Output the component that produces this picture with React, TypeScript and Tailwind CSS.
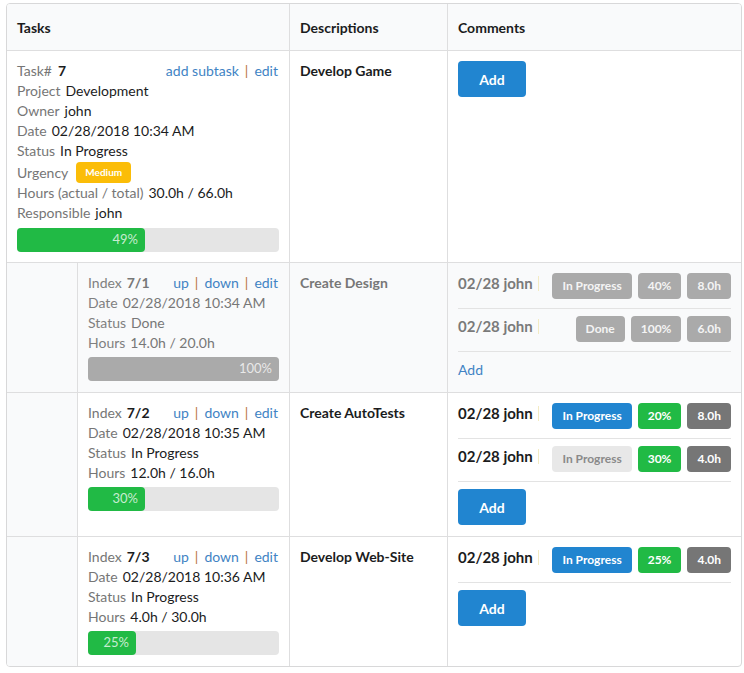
import React from 'react'

type Tag = { text: string; cls: string }
type Comment = { who: string; tags: Tag[] }

const FONT = { fontFamily: 'Lato, "Open Sans", sans-serif' }

function Sep() {
  return <span className="mx-[6px] text-[#b8743f]">|</span>
}

function Progress({ pct, width, barCls, label }: { pct: number; width: number; barCls: string; label: string }) {
  return (
    <div className="h-6 w-full rounded-[4px] bg-[#e5e5e5]">
      <div
        className={`flex h-6 items-center justify-end rounded-[4px] pr-[7px] text-[13px] text-white/75 ${barCls}`}
        style={{ width: Math.round((pct / 100) * width) }}
      >
        {label}
      </div>
    </div>
  )
}

function Line({ label, value, bold, dim }: { label: string; value: string; bold?: boolean; dim?: boolean }) {
  return (
    <div className="h-5 leading-5 whitespace-nowrap">
      <span className={dim ? 'text-[#808080]' : 'text-[#767676]'}>{label}</span>
      <span className={`ml-[5px] ${dim ? 'text-[#777]' : 'text-[#1b1c1d]'} ${bold ? 'font-bold' : ''}`}>{value}</span>
    </div>
  )
}

function Comments({ items, addButton, dim }: { items: Comment[]; addButton: boolean; dim?: boolean }) {
  return (
    <div className="flex flex-col">
      {items.map((c, i) => (
        <div key={i} className={`flex items-start border-b border-[#e3e3e3] pb-[9px] ${i > 0 ? 'pt-[7px]' : ''}`}>
          <span className={`text-[15px] font-bold leading-5 ${dim ? 'text-[#7a7a7a]' : 'text-[#1b1c1d]'}`}>{c.who}</span>
          <span className="ml-[5px] mt-[3px] h-[15px] w-px bg-[#f3ebc3]" />
          <div className="ml-auto flex gap-[6px]">
            {c.tags.map((t, j) => (
              <span key={j} className={`flex h-[26px] items-center rounded-[4px] px-[10px] text-[12px] font-bold ${t.cls}`}>
                {t.text}
              </span>
            ))}
          </div>
        </div>
      ))}
      {addButton ? (
        <button className={`${items.length ? 'mt-[7px]' : ''} h-9 w-[68px] rounded-[4px] bg-[#2185d0] text-[14px] font-bold text-white`}>
          Add
        </button>
      ) : (
        <a className="mt-[8px] h-5 leading-5 text-[#4183c4]">Add</a>
      )}
    </div>
  )
}

function SubTask(props: {
  index: string
  date: string
  status: string
  hours: string
  pct: number
  desc: string
  comments: Comment[]
  addButton: boolean
  dim?: boolean
}) {
  const { dim } = props
  return (
    <div className={`grid grid-cols-[282px_158px_1fr] border-t border-[#dededf] ${dim ? 'bg-[#f9fafb]' : ''}`}>
      <div className="grid grid-cols-[71px_1fr]">
        <div className="border-r border-[#dededf] bg-[#f9fafb]" />
        <div className="px-[10px] pt-[10px] pb-[11px]">
          <div className="flex h-5 justify-between leading-5">
            <div>
              <span className={dim ? 'text-[#808080]' : 'text-[#767676]'}>Index</span>
              <span className={`ml-[5px] font-bold ${dim ? 'text-[#777]' : 'text-[#1b1c1d]'}`}>{props.index}</span>
            </div>
            <div className="pr-px text-[#4183c4]">
              up<Sep />down<Sep />edit
            </div>
          </div>
          <Line label="Date" value={props.date} dim={dim} />
          <Line label="Status" value={props.status} dim={dim} />
          <Line label="Hours" value={props.hours} dim={dim} />
          <div className="mt-1">
            <Progress
              pct={props.pct}
              width={191}
              barCls={dim ? 'bg-[#aaaaaa]' : 'bg-[#21ba45]'}
              label={`${props.pct}%`}
            />
          </div>
        </div>
      </div>
      <div className={`border-l border-[#dededf] px-[10px] pt-[10px] font-bold leading-5 ${dim ? 'text-[#777]' : 'text-[#1b1c1d]'}`}>
        {props.desc}
      </div>
      <div className="border-l border-[#dededf] px-[10px] pt-[10px] pb-[11px]">
        <Comments items={props.comments} addButton={props.addButton} dim={dim} />
      </div>
    </div>
  )
}

const grey = 'bg-[#767676] text-white'
const blue = 'bg-[#2185d0] text-white'
const green = 'bg-[#21ba45] text-white'
const faded = 'bg-[#aaaaaa] text-[#f4f4f4]'

export default function App() {
  return (
    <div className="min-h-[673px] bg-white pt-[3px] text-[14px]" style={FONT}>
      <div className="ml-[6px] w-[736px] overflow-hidden rounded-[4px] border border-[#d8d8d9]">
        <div className="grid h-[46px] grid-cols-[282px_158px_1fr] bg-[#f9fafb] font-bold text-[#1b1c1d]">
          <div className="flex items-center px-[10px]">Tasks</div>
          <div className="flex items-center border-l border-[#dededf] px-[10px]">Descriptions</div>
          <div className="flex items-center border-l border-[#dededf] px-[10px]">Comments</div>
        </div>

        <div className="grid grid-cols-[282px_158px_1fr] border-t border-[#dededf]">
          <div className="px-[10px] pt-[10px] pb-[10px]">
            <div className="flex h-5 justify-between leading-5">
              <div>
                <span className="text-[#767676]">Task#</span>
                <span className="ml-[6px] font-bold text-[#1b1c1d]">7</span>
              </div>
              <div className="pr-px text-[#4183c4]">
                add subtask<Sep />edit
              </div>
            </div>
            <Line label="Project" value="Development" />
            <Line label="Owner" value="john" />
            <Line label="Date" value="02/28/2018 10:34 AM" />
            <Line label="Status" value="In Progress" />
            <div className="flex h-[22px] items-center">
              <span className="text-[#767676]">Urgency</span>
              <span className="ml-[8px] flex h-[21px] items-center rounded-[4px] bg-[#fbbd08] px-[9px] text-[10px] font-bold text-white">
                Medium
              </span>
            </div>
            <Line label="Hours (actual / total)" value="30.0h / 66.0h" />
            <Line label="Responsible" value="john" />
            <div className="mt-[5px]">
              <Progress pct={49} width={262} barCls="bg-[#21ba45]" label="49%" />
            </div>
          </div>
          <div className="border-l border-[#dededf] px-[10px] pt-[10px] font-bold leading-5 text-[#1b1c1d]">Develop Game</div>
          <div className="border-l border-[#dededf] px-[10px] pt-[10px]">
            <Comments items={[]} addButton />
          </div>
        </div>

        <SubTask
          dim
          index="7/1"
          date="02/28/2018 10:34 AM"
          status="Done"
          hours="14.0h / 20.0h"
          pct={100}
          desc="Create Design"
          addButton={false}
          comments={[
            { who: '02/28 john', tags: [{ text: 'In Progress', cls: faded }, { text: '40%', cls: faded }, { text: '8.0h', cls: faded }] },
            { who: '02/28 john', tags: [{ text: 'Done', cls: faded }, { text: '100%', cls: faded }, { text: '6.0h', cls: faded }] },
          ]}
        />
        <SubTask
          index="7/2"
          date="02/28/2018 10:35 AM"
          status="In Progress"
          hours="12.0h / 16.0h"
          pct={30}
          desc="Create AutoTests"
          addButton
          comments={[
            { who: '02/28 john', tags: [{ text: 'In Progress', cls: blue }, { text: '20%', cls: green }, { text: '8.0h', cls: grey }] },
            { who: '02/28 john', tags: [{ text: 'In Progress', cls: 'bg-[#e8e8e8] text-[#8a8a8a]' }, { text: '30%', cls: green }, { text: '4.0h', cls: grey }] },
          ]}
        />
        <SubTask
          index="7/3"
          date="02/28/2018 10:36 AM"
          status="In Progress"
          hours="4.0h / 30.0h"
          pct={25}
          desc="Develop Web-Site"
          addButton
          comments={[
            { who: '02/28 john', tags: [{ text: 'In Progress', cls: blue }, { text: '25%', cls: green }, { text: '4.0h', cls: grey }] },
          ]}
        />
      </div>
    </div>
  )
}
